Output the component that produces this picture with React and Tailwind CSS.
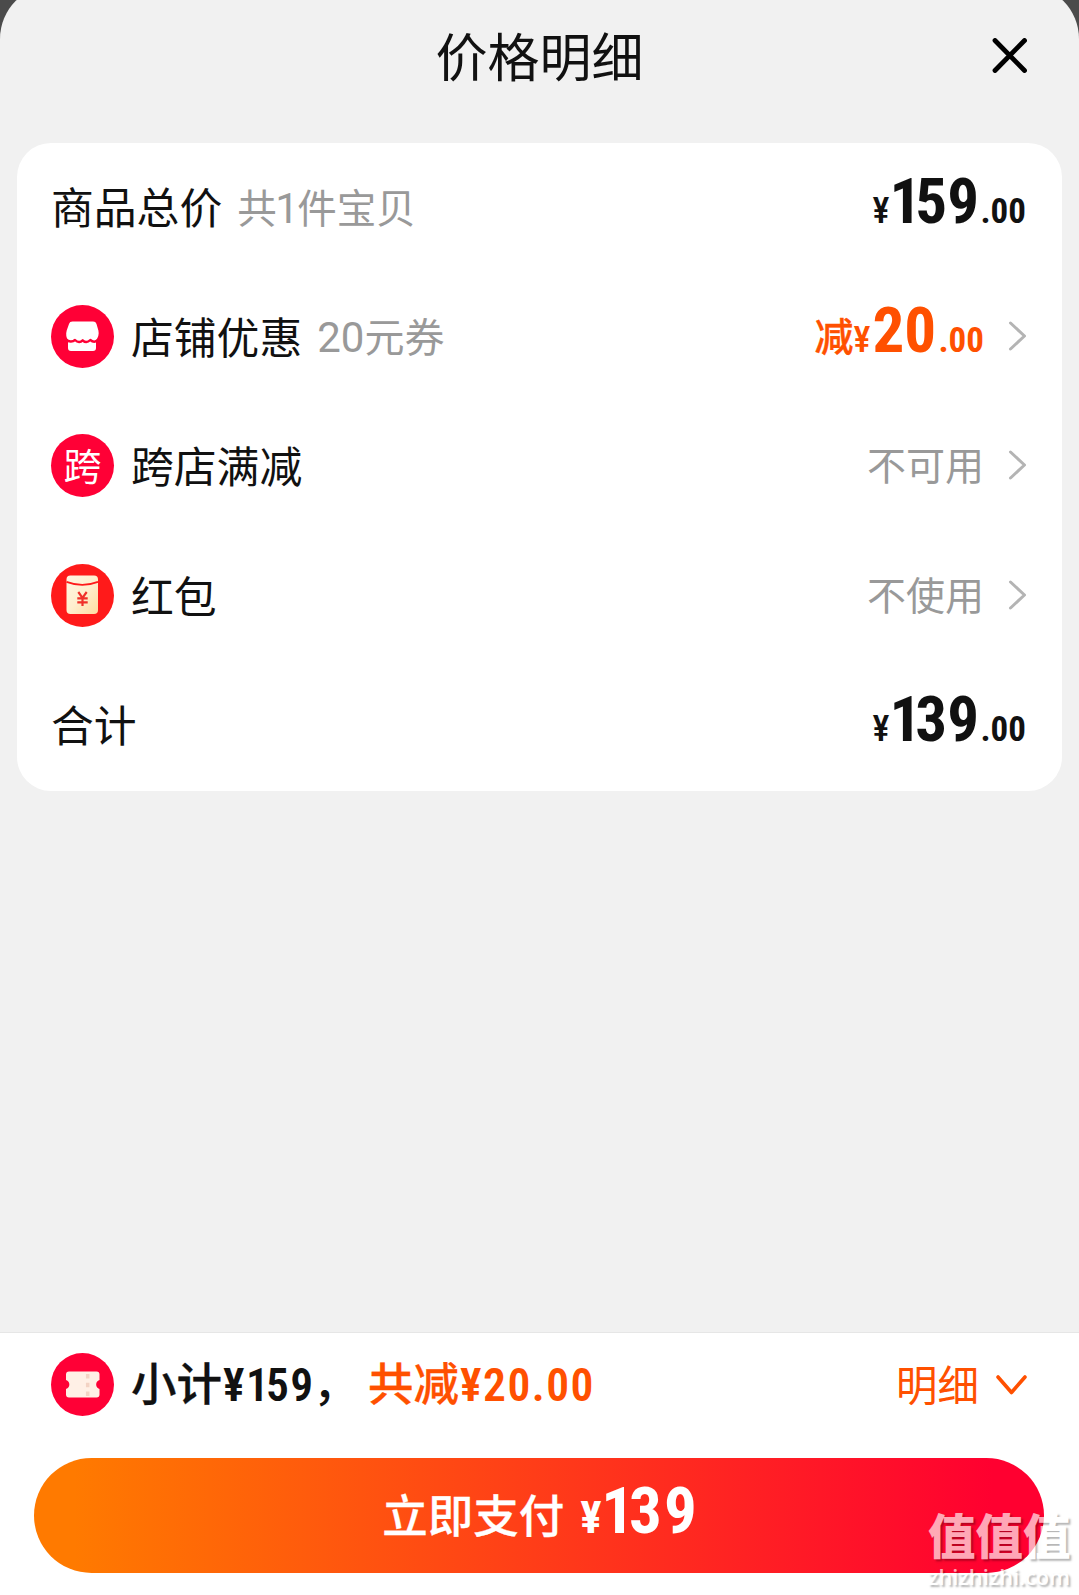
import React from "react";

const dark = "text-[#111111]";
const orange = "text-[#ff5000]";

function Price({ prefix, children, color, wide }) {
  return (
    <div className={`relative -top-[6.500px] flex items-baseline leading-none ${color} font-['Roboto','Noto_Sans_CJK_SC',sans-serif]`}>
      {prefix && <span className="relative -top-[1.500px] text-[39px] font-medium [-webkit-text-stroke:0.4px]">{prefix}</span>}
      <span className={`inline-block text-[36px] font-medium [font-stretch:75%] ${wide ? "w-[17px]" : "w-[19px]"}`}>¥</span>
      <span className={`inline-block text-[63px] font-bold whitespace-nowrap [font-stretch:75%] ${wide ? "w-[91px]" : "w-[66px]"}`}>{children}</span>
      <span className="inline-block text-[35px] font-bold [font-stretch:75%]">.00</span>
    </div>
  );
}

function Chevron() {
  return (
    <svg className="relative -top-[1.500px] ml-6 h-[30px] w-[18px]" viewBox="0 0 18 30" fill="none" stroke="#b4b4b4" strokeWidth="3" strokeLinecap="round" strokeLinejoin="round">
      <path d="M2.500 2 16.500 15 2.500 28" />
    </svg>
  );
}

function ShopIcon() {
  return (
    <svg className="size-[63px]" viewBox="0 0 63 63">
      <circle cx="31.500" cy="31.500" r="31.500" fill="#ff0036" />
      <path fill="#fff" d="M21.500 16.500h20.500c1.800 0 2.900.8 3.500 2.500l1.900 6.500c.9 4-.4 7.200-2.400 9.800V43c0 2-1 3-3 3H20c-2 0-3-1-3-3v-7.700c-1.600-2.500-2.400-5.800-1.300-9.800L18 19c.6-1.700 1.700-2.500 3.500-2.500z" />
      <path d="M15 34.500c2.800 2.600 6.700 2.600 9 .5 2.700 2.600 5.500 2.600 7.700.3 2.300 2.300 5 2.300 7.600-.3 2.400 2.100 5.700 2.100 8.700-.5" fill="none" stroke="#ff0036" strokeWidth="2.400" strokeLinejoin="round" />
    </svg>
  );
}

function CrossStoreIcon() {
  return (
    <div className="flex size-[63px] items-center justify-center rounded-full bg-[#ff0036] text-[38px] leading-none text-white">
      <span className="relative top-px">跨</span>
    </div>
  );
}

function PacketIcon() {
  return (
    <svg className="size-[63px]" viewBox="0 0 63 63">
      <defs>
        <linearGradient id="packet" x1="0" y1="0" x2="1" y2="1">
          <stop offset="0" stopColor="#fff6e3" />
          <stop offset=".5" stopColor="#ffefcf" />
          <stop offset="1" stopColor="#ffdca2" />
        </linearGradient>
      </defs>
      <circle cx="31.500" cy="31.500" r="31.500" fill="#ff1a1a" />
      <rect x="15.500" y="11.500" width="31.500" height="38.500" rx="4" fill="url(#packet)" />
      <path d="M15.500 17.800q15.750 6 31.500 0" fill="none" stroke="#ff1a1a" strokeWidth="1.800" />
      <path d="M27.300 28 31.500 33.800l4.200-5.800M31.500 33.500v8.500M26.300 34.300h10.400M26.300 38.300h10.400" fill="none" stroke="#f0302a" strokeWidth="2.200" />
    </svg>
  );
}

function TicketIcon() {
  return (
    <svg className="size-[63px]" viewBox="0 0 63 63">
      <circle cx="31.500" cy="31.500" r="31.500" fill="#ff0036" />
      <path fill="#fff0e6" d="M18 18.500h27.500c2 0 3 1 3 3V27a4.700 4.700 0 0 0 0 9v5.500c0 2-1 3-3 3H18c-2 0-3-1-3-3V36a4.700 4.700 0 0 0 0-9v-5.500c0-2 1-3 3-3z" />
      <path d="M36.700 21v22" stroke="#f3d3c4" strokeWidth="3.500" strokeDasharray="4.500 4.200" />
    </svg>
  );
}

function Row({ icon, label, note, children }) {
  return (
    <div className="flex h-[129.500px] items-center justify-between">
      <div className="flex items-center">
        {icon && <div className="relative -top-px mr-[17px]">{icon}</div>}
        <span className={`relative top-[2px] text-[42.800px] leading-none ${dark}`}>{label}</span>
        {note && <span className="relative top-px ml-[15px] text-[40px] leading-none text-[#999999]">{note}</span>}
      </div>
      <div className="flex items-center">{children}</div>
    </div>
  );
}

export default function App() {
  return (
    <div className="relative flex h-[1595px] w-[1079px] flex-col overflow-hidden bg-[#4b4b4b] font-['Roboto','Noto_Sans_CJK_SC',sans-serif]">
      <div className="-mt-[15px] flex flex-1 flex-col rounded-t-[54px] bg-[#f1f1f1] pt-[15px]">
        <header className="grid h-[143px] grid-cols-[1fr_auto_1fr] items-start px-[52px]">
          <h1 className={`col-start-2 pt-[34px] text-[52px] leading-[52px] ${dark}`}>价格明细</h1>
          <svg className="mt-[38px] size-[35px] justify-self-end" viewBox="0 0 35 35" stroke="#000" strokeWidth="4.800" strokeLinecap="round">
            <path d="M3 2.500l29.500 30M32.500 2.500l-29.500 30" />
          </svg>
        </header>
        <section className="mx-[17px] rounded-[34px] bg-white px-[34px] pr-[36px]">
          <Row
            label="商品总价"
            note={
              <span className="text-[39.500px]">
                共<span className="-mx-[1.500px] text-[42px]">1</span>件宝贝
              </span>
            }
          >
            <Price color={dark} wide>
              <span className="tracking-[-6px]">1</span>59
            </Price>
          </Row>
          <Row
            icon={<ShopIcon />}
            label="店铺优惠"
            note={
              <span>
                <span className="text-[42px]">20</span>元券
              </span>
            }
          >
            <Price prefix="减" color={orange}>20</Price>
            <Chevron />
          </Row>
          <Row icon={<CrossStoreIcon />} label="跨店满减">
            <span className="relative top-px text-[39px] leading-none text-[#999999]">不可用</span>
            <Chevron />
          </Row>
          <Row icon={<PacketIcon />} label="红包">
            <span className="relative top-px text-[39px] leading-none text-[#999999]">不使用</span>
            <Chevron />
          </Row>
          <Row label="合计">
            <Price color={dark} wide>
              <span className="tracking-[-6px]">1</span>39
            </Price>
          </Row>
        </section>
      </div>
      <footer className="h-[263px] border-t border-[#e6e6e6] bg-white px-[34px]">
        <div className="flex h-[103px] items-center px-[17px]">
          <TicketIcon />
          <div className={`relative top-[1px] ml-[17px] flex items-baseline text-[45.500px] font-medium leading-none ${dark}`}>
            <span className="[-webkit-text-stroke:0.3px]">小计</span>
            <span className="ml-px inline-block w-[90px] font-semibold tracking-[1.500px] whitespace-nowrap [font-stretch:75%]">
              ¥<span className="tracking-[-3px]">1</span>59
            </span>
            <span className="w-[55px]">，</span>
            <span className={`[-webkit-text-stroke:0.3px] ${orange}`}>共减</span>
            <span className={`ml-px font-semibold tracking-[1.500px] [font-stretch:75%] ${orange}`}>¥20.00</span>
          </div>
          <span className={`relative top-[2px] ml-auto text-[41.500px] leading-none ${orange}`}>明细</span>
          <svg className="ml-[17px] mr-px h-[20px] w-[31px]" viewBox="0 0 31 20" fill="none" stroke="#ff5000" strokeWidth="3.600" strokeLinecap="round" strokeLinejoin="round">
            <path d="M2 2 15.500 17.500 29 2" />
          </svg>
        </div>
        <button className="mt-[22px] flex h-[115px] w-[1010px] items-baseline justify-center rounded-full bg-linear-to-r/srgb from-[#ff7a00] from-4% to-[#ff0030] to-95% font-medium text-white">
          <span className="ml-[3px] text-[45.500px] leading-[120px] [-webkit-text-stroke:0.3px]">立即支付</span>
          <span className="ml-[16px] w-[21px] text-[45px] font-bold [font-stretch:75%]">¥</span>
          <span className="text-[65px] leading-none font-bold tracking-[2px] [font-stretch:75%]">
            <span className="tracking-[-5px]">1</span>39
          </span>
        </button>
      </footer>
      <div className="absolute top-[1511px] left-[928px] w-[150px] text-white opacity-65 [text-shadow:2px_2px_2px_rgba(0,0,0,0.45)]">
        <div className="text-[47.500px] leading-[54px] font-black">值值值</div>
        <div className="font-['Open_Sans'] text-[21.800px] leading-[24px] font-semibold">zhizhizhi.com</div>
      </div>
    </div>
  );
}
